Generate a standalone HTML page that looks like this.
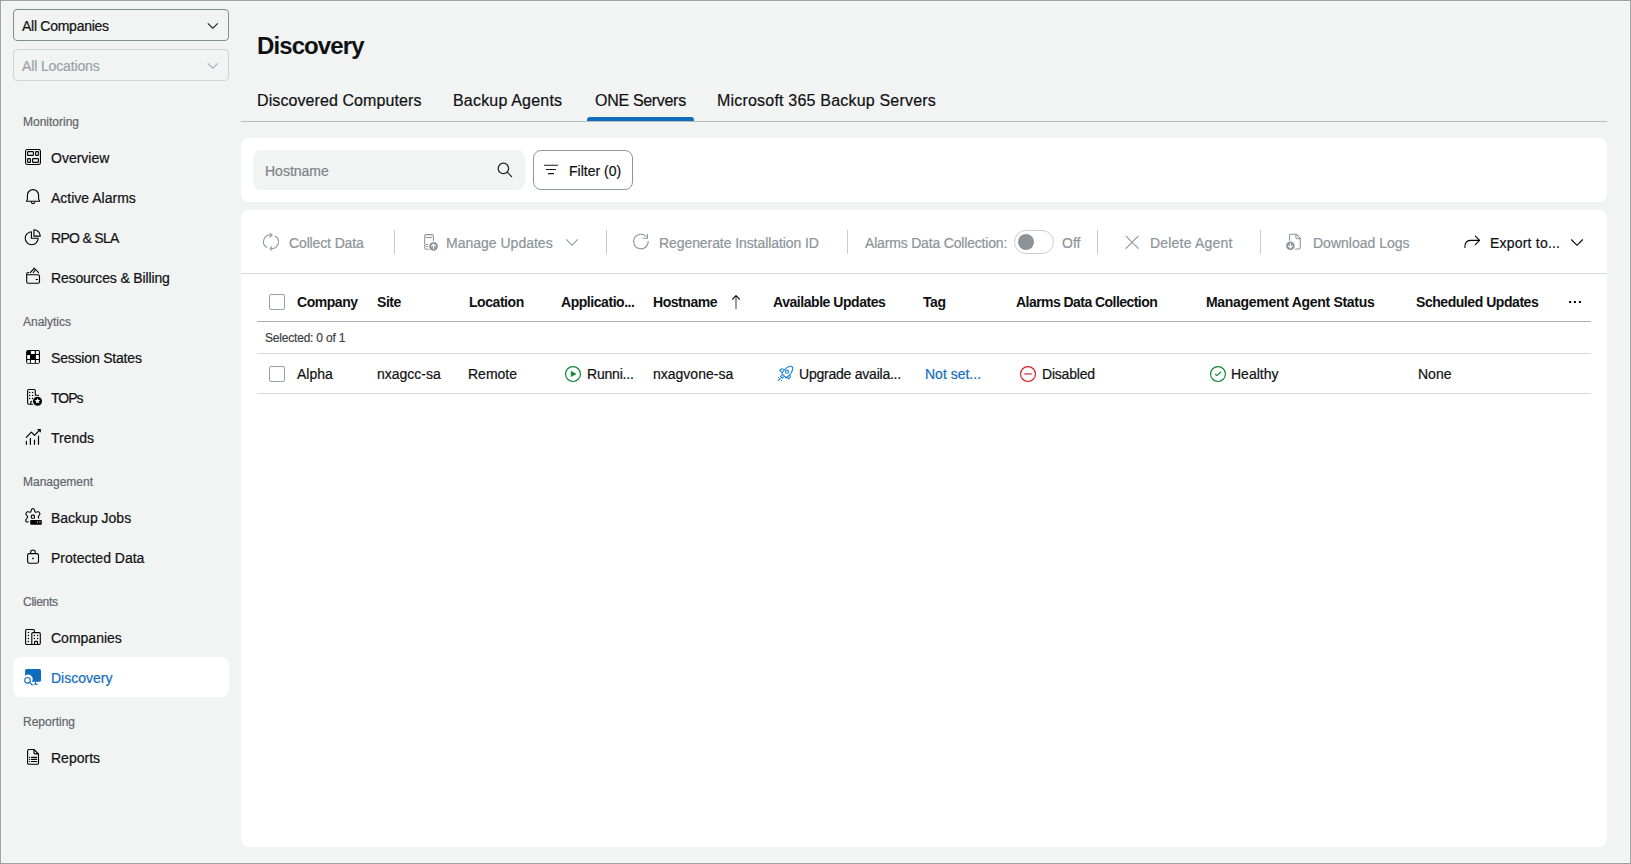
<!DOCTYPE html>
<html><head><meta charset="utf-8">
<style>
html,body{margin:0;padding:0;}
body{width:1631px;height:864px;position:relative;overflow:hidden;background:#f2f3f3;font-family:"Liberation Sans",sans-serif;color:#0f1112;}
.a{position:absolute;}
.t{position:absolute;white-space:nowrap;line-height:1;font-size:14px;-webkit-text-stroke:0.2px currentColor;}
.s12{font-size:12px;}
.s16{font-size:16px;}
.b{font-weight:bold;-webkit-text-stroke:0;}
.hd{font-weight:bold;letter-spacing:-0.45px;-webkit-text-stroke:0;}
.grey{color:#8b9499;}
.lbl{color:#5f666b;font-size:12px;}
svg{position:absolute;overflow:visible;}
.frame{position:absolute;left:0;top:0;width:1629px;height:862px;border:1px solid #a0a0a0;box-shadow:inset 0 0 0 1px #f8f9f9;pointer-events:none;}
.panel{position:absolute;background:#fff;border-radius:8px;}
.sep{position:absolute;top:230px;width:1px;height:24px;background:#c9cdd0;}
.cb{position:absolute;width:14px;height:14px;border:1px solid #9aa1a5;border-radius:2px;background:#fff;}
</style></head><body>

<!-- Sidebar dropdowns -->
<div class="a" style="left:13px;top:9px;width:214px;height:30px;border:1px solid #858c91;border-radius:4px;"></div>
<div class="t" style="left:22px;top:19px;letter-spacing:-0.27px;">All Companies</div>
<svg style="left:205px;top:20px" width="14" height="10"><path d="M2.8 3.4 L7.8 8.2 L12.8 3.4" fill="none" stroke="#1a1c1e" stroke-width="1.05"/></svg>

<div class="a" style="left:13px;top:49px;width:214px;height:30px;border:1px solid #cfd3d5;border-radius:4px;"></div>
<div class="t" style="left:22px;top:59px;color:#9aa1a6;letter-spacing:-0.14px;">All Locations</div>
<svg style="left:205px;top:60px" width="14" height="10"><path d="M2.8 3.4 L7.8 8.2 L12.8 3.4" fill="none" stroke="#a3a9ad" stroke-width="1.05"/></svg>

<!-- Sidebar sections -->
<div class="t lbl" style="left:23px;top:116px;">Monitoring</div>
<div class="t" style="left:51px;top:151px;">Overview</div>
<div class="t" style="left:51px;top:191px;">Active Alarms</div>
<div class="t" style="left:51px;top:231px;letter-spacing:-0.69px;">RPO &amp; SLA</div>
<div class="t" style="left:51px;top:271px;letter-spacing:-0.14px;">Resources &amp; Billing</div>

<div class="t lbl" style="left:23px;top:316px;">Analytics</div>
<div class="t" style="left:51px;top:351px;letter-spacing:-0.19px;">Session States</div>
<div class="t" style="left:51px;top:391px;letter-spacing:-1px;">TOPs</div>
<div class="t" style="left:51px;top:431px;">Trends</div>

<div class="t lbl" style="left:23px;top:476px;">Management</div>
<div class="t" style="left:51px;top:511px;">Backup Jobs</div>
<div class="t" style="left:51px;top:551px;">Protected Data</div>

<div class="t lbl" style="left:23px;top:596px;letter-spacing:-0.28px;">Clients</div>
<div class="t" style="left:51px;top:631px;">Companies</div>
<div class="a" style="left:13px;top:657px;width:216px;height:40px;background:#fff;border-radius:8px;"></div>
<div class="t" style="left:51px;top:671px;color:#0f6cbd;">Discovery</div>

<div class="t lbl" style="left:23px;top:716px;">Reporting</div>
<div class="t" style="left:51px;top:751px;">Reports</div>

<!-- ICONS_SIDEBAR -->
<g></g>
<!-- Overview -->
<svg style="left:20px;top:145px" width="25" height="25" viewBox="0 0 25 25" fill="none" stroke="#000" stroke-width="1.1">
<rect x="5.55" y="4.55" width="14.9" height="14.9" rx="1.6"/>
<rect x="7.6" y="6.6" width="5.8" height="3.8" rx="0.7"/>
<rect x="15.6" y="6.6" width="2.8" height="3.8" rx="0.7"/>
<rect x="7.6" y="13.6" width="2.8" height="3.8" rx="0.7"/>
<rect x="12.6" y="13.6" width="5.8" height="3.8" rx="0.7"/>
</svg>
<!-- Bell -->
<svg style="left:20px;top:185px" width="25" height="25" viewBox="0 0 25 25" fill="none" stroke="#000" stroke-width="1.1" stroke-linejoin="round">
<path d="M7.4 14.3 V10.2 A5.6 5.6 0 0 1 18.6 10.2 V14.3 C18.6 14.8 19.5 15.2 19.5 15.8 V16.3 H6.6 V15.8 C6.6 15.2 7.4 14.8 7.4 14.3 Z"/>
<path d="M11.2 16.8 A1.8 1.8 0 0 0 14.8 16.8"/>
</svg>
<!-- RPO -->
<svg style="left:20px;top:225px" width="25" height="25" viewBox="0 0 25 25" fill="none" stroke="#000" stroke-width="1.1" stroke-linejoin="round">
<path d="M11.4 6.7 A6.5 6.5 0 1 0 18.2 13.3 H11.4 Z"/>
<path d="M13.9 4.7 V11.1 H20.3 A6.4 6.4 0 0 0 13.9 4.7 Z"/>
</svg>
<!-- Wallet -->
<svg style="left:20px;top:265px" width="25" height="25" viewBox="0 0 25 25" fill="none" stroke="#000" stroke-width="1.1" stroke-linecap="round" stroke-linejoin="round">
<path d="M8.7 7.5 H8.2 A1.5 1.5 0 0 0 6.7 9 V16.7 A1.5 1.5 0 0 0 8.2 18.2 H18 A1.5 1.5 0 0 0 19.5 16.7 V11.3 A1.5 1.5 0 0 0 18 9.8 H6.9"/>
<path d="M10.3 7.6 L14.2 3.2 L18.6 7.6"/>
<path d="M13.3 7.6 L15.4 4.5"/>
<path d="M16.2 14.5 H17.6"/>
</svg>
<!-- Session states -->
<svg style="left:20px;top:345px" width="25" height="25" viewBox="0 0 25 25">
<rect x="6.1" y="5.1" width="13.9" height="13.7" rx="2" fill="#000"/>
<g fill="#fff">
<rect x="10.9" y="6.1" width="3.9" height="2.8" rx="0.4"/>
<rect x="15.9" y="6.1" width="3" height="2.8" rx="0.6"/>
<rect x="7.2" y="10" width="2.8" height="3.9" rx="0.4"/>
<rect x="15.9" y="10" width="3" height="3.9" rx="0.4"/>
<rect x="7.2" y="14.9" width="2.8" height="3" rx="0.6"/>
<rect x="10.9" y="14.9" width="3.9" height="3" rx="0.4"/>
<rect x="15.9" y="14.9" width="3" height="3" rx="0.6"/>
</g>
</svg>
<!-- TOPs -->
<svg style="left:20px;top:385px" width="25" height="25" viewBox="0 0 25 25" fill="none" stroke="#000" stroke-width="1.1" stroke-linecap="round" stroke-linejoin="round">
<path d="M12.5 19.3 H8.8 A1.2 1.2 0 0 1 7.6 18.1 V5.7 A1.2 1.2 0 0 1 8.8 4.5 H14.1 A1.2 1.2 0 0 1 15.3 5.7 V10.3 H18.6"/>
<path d="M10.7 19 V17.4 A1 1 0 0 1 11.7 16.4"/>
<g fill="#000" stroke="none">
<circle cx="9.7" cy="7.6" r="0.75"/><circle cx="12.6" cy="7.6" r="0.75"/>
<circle cx="9.7" cy="10.6" r="0.75"/><circle cx="12.6" cy="10.6" r="0.75"/>
<circle cx="9.7" cy="13.5" r="0.75"/><circle cx="12.6" cy="13.5" r="0.65"/>
<circle cx="17.5" cy="16.3" r="4.5"/>
</g>
<path fill="#fff" stroke="none" d="M17.5 13.2 L18.35 15.1 L20.3 15.25 L18.8 16.55 L19.3 18.5 L17.5 17.45 L15.7 18.5 L16.2 16.55 L14.7 15.25 L16.65 15.1 Z"/>
</svg>
<!-- Trends -->
<svg style="left:20px;top:425px" width="25" height="25" viewBox="0 0 25 25" fill="none" stroke="#000" stroke-width="1.2" stroke-linecap="round" stroke-linejoin="round">
<path d="M6.4 16.3 V19.3 M10.4 13.3 V19.3 M14.5 15.1 V19.3 M18.5 11.2 V19.3"/>
<path d="M6.3 12.4 L11.4 7.2 L14.5 10.4 L19.6 5.1"/>
<path d="M17.1 4.1 H20.8 V7.8 Z" fill="#000" stroke="none"/>
</svg>
<!-- Backup jobs -->
<svg style="left:20px;top:505px" width="25" height="25" viewBox="0 0 25 25" fill="none" stroke="#000" stroke-width="1.1" stroke-linecap="round" stroke-linejoin="round">
<path d="M8.2 16.6 C7.2 17.6 5.9 16.8 5.7 15.6 C5.5 14.5 6.4 13.8 7 13.3 C7.9 12.5 7.6 11.3 6.9 10.6 C6 9.8 5.6 8.8 6.1 8 C6.8 6.8 8.2 6.4 9.3 7.1 C10.3 7.6 10.9 7 11.1 5.8 C11.4 4.2 12 3.5 12.9 3.5 C13.8 3.5 14.4 4.2 14.7 5.8 C14.9 7 15.5 7.6 16.5 7.1 C17.6 6.4 19 6.8 19.7 8 C20.2 8.8 19.8 9.8 18.9 10.6 C18.2 11.3 17.9 12.3 18.8 13.1"/>
<rect x="11.3" y="10.1" width="3.2" height="3.2" rx="1.1"/>
<rect x="10.2" y="15.1" width="11.6" height="4.6" rx="0.9" fill="#000" stroke="none"/>
<rect x="16.9" y="16.2" width="1.1" height="1.7" fill="#999" stroke="none"/>
<rect x="19.1" y="16.2" width="1.6" height="1.7" fill="#777" stroke="none"/>
</svg>
<!-- Lock -->
<svg style="left:20px;top:545px" width="25" height="25" viewBox="0 0 25 25" fill="none" stroke="#000" stroke-width="1.1" stroke-linejoin="round">
<rect x="7.6" y="8.6" width="10.9" height="9.6" rx="1.6"/>
<path d="M10.6 8.6 V7.3 A2.35 2.35 0 0 1 15.3 7.3 V8.6"/>
<circle cx="13" cy="13.4" r="0.85" fill="#000" stroke="none"/>
</svg>
<!-- Companies -->
<svg style="left:20px;top:625px" width="25" height="25" viewBox="0 0 25 25" fill="none" stroke="#000" stroke-width="1.1" stroke-linejoin="round">
<path d="M11.8 19.5 H6.8 A1.2 1.2 0 0 1 5.6 18.3 V5.7 A1.2 1.2 0 0 1 6.8 4.5 H13.2 A1.2 1.2 0 0 1 14.4 5.7 V7.6"/>
<path d="M11.8 19.5 V8.8 A1.2 1.2 0 0 1 13 7.6 H19.1 A1.2 1.2 0 0 1 20.3 8.8 V18.3 A1.2 1.2 0 0 1 19.1 19.5 Z"/>
<path d="M14.6 19.3 V17.3 A0.9 0.9 0 0 1 15.5 16.4 H16.7 A0.9 0.9 0 0 1 17.6 17.3 V19.3"/>
<g fill="#000" stroke="none">
<circle cx="8.4" cy="7.6" r="0.75"/><circle cx="8.4" cy="10.6" r="0.75"/><circle cx="8.4" cy="13.5" r="0.75"/><circle cx="8.4" cy="16.5" r="0.75"/>
<circle cx="14.3" cy="10.6" r="0.75"/><circle cx="17.65" cy="10.6" r="0.75"/><circle cx="14.3" cy="13.5" r="0.75"/><circle cx="17.65" cy="13.5" r="0.75"/>
</g>
</svg>
<!-- Discovery -->
<svg style="left:20px;top:665px" width="25" height="25" viewBox="0 0 25 25">
<path fill="#0f6cbd" d="M6.6 4.05 H19.5 A1.5 1.5 0 0 1 21 5.55 V15.3 A1.5 1.5 0 0 1 19.5 16.8 H11.6 A4.4 4.4 0 0 0 5.1 10.9 V5.55 A1.5 1.5 0 0 1 6.6 4.05 Z"/>
<path d="M15.6 16.5 V19.2 M13.6 19.2 H17.9" stroke="#0f6cbd" stroke-width="1.1" fill="none"/>
<circle cx="7.5" cy="15.3" r="2.8" fill="none" stroke="#0f6cbd" stroke-width="1.1"/>
<path d="M9.6 17.3 L12.3 20" stroke="#0f6cbd" stroke-width="1.1" stroke-linecap="round"/>
</svg>
<!-- Reports -->
<svg style="left:20px;top:745px" width="25" height="25" viewBox="0 0 25 25" fill="none" stroke="#000" stroke-width="1.1" stroke-linecap="round" stroke-linejoin="round">
<path d="M13.9 4.5 H8.9 A1.3 1.3 0 0 0 7.6 5.8 V17.9 A1.3 1.3 0 0 0 8.9 19.2 H17.2 A1.3 1.3 0 0 0 18.5 17.9 V9 L13.9 4.5 V7.6 A1.3 1.3 0 0 0 15.2 8.9 H18.3"/>
<path d="M11.4 12.4 H16.7 M11.4 14.4 H16.7 M11.4 16.5 H16.7"/>
<g fill="#000" stroke="none"><circle cx="9.5" cy="12.4" r="0.6"/><circle cx="9.5" cy="14.4" r="0.6"/><circle cx="9.5" cy="16.5" r="0.6"/></g>
</svg>


<!-- Title & tabs -->
<div class="t b" style="left:257px;top:34px;font-size:24px;letter-spacing:-0.9px;">Discovery</div>
<div class="t s16" style="left:257px;top:93px;letter-spacing:0.09px;">Discovered Computers</div>
<div class="t s16" style="left:453px;top:93px;letter-spacing:0.19px;">Backup Agents</div>
<div class="t s16" style="left:595px;top:93px;letter-spacing:-0.31px;">ONE Servers</div>
<div class="t s16" style="left:717px;top:93px;letter-spacing:0.2px;">Microsoft 365 Backup Servers</div>
<div class="a" style="left:241px;top:121px;width:1366px;height:1px;background:#b7bcbf;"></div>
<div class="a" style="left:587px;top:117px;width:107px;height:4px;background:#0f6cbd;border-radius:3px 3px 0 0;"></div>

<!-- Filter panel -->
<div class="panel" style="left:241px;top:138px;width:1366px;height:64px;"></div>
<div class="a" style="left:253px;top:150px;width:272px;height:40px;background:#f2f3f3;border-radius:8px;"></div>
<div class="t" style="left:265px;top:164px;color:#7c8387;">Hostname</div>
<div class="a" style="left:533px;top:150px;width:98px;height:38px;border:1px solid #8f969a;border-radius:8px;"></div>
<div class="t" style="left:569px;top:164px;">Filter (0)</div>

<!-- Main panel -->
<div class="panel" style="left:241px;top:210px;width:1366px;height:637px;"></div>
<div class="a" style="left:241px;top:273px;width:1366px;height:1px;background:#d5d9db;"></div>

<div class="t grey" style="left:289px;top:236px;letter-spacing:-0.13px;">Collect Data</div>
<div class="sep" style="left:394px;"></div>
<div class="t grey" style="left:446px;top:236px;">Manage Updates</div>
<div class="sep" style="left:606px;"></div>
<div class="t grey" style="left:659px;top:236px;letter-spacing:-0.08px;">Regenerate Installation ID</div>
<div class="sep" style="left:847px;"></div>
<div class="t grey" style="left:865px;top:236px;letter-spacing:-0.18px;">Alarms Data Collection:</div>
<div class="a" style="left:1014px;top:230px;width:38px;height:22px;border:1px solid #c9cdd0;border-radius:12px;background:#fff;"></div>
<div class="a" style="left:1018px;top:234px;width:16px;height:16px;border-radius:50%;background:#8b9398;"></div>
<div class="t grey" style="left:1062px;top:236px;">Off</div>
<div class="sep" style="left:1097px;"></div>
<div class="t grey" style="left:1150px;top:236px;letter-spacing:0.2px;">Delete Agent</div>
<div class="sep" style="left:1260px;"></div>
<div class="t grey" style="left:1313px;top:236px;">Download Logs</div>
<div class="t" style="left:1490px;top:236px;letter-spacing:0.21px;">Export to...</div>

<!-- Table -->
<div class="cb" style="left:269px;top:294px;"></div>
<div class="t hd" style="left:297px;top:295px;">Company</div>
<div class="t hd" style="left:377px;top:295px;">Site</div>
<div class="t hd" style="left:469px;top:295px;">Location</div>
<div class="t hd" style="left:561px;top:295px;">Applicatio...</div>
<div class="t hd" style="left:653px;top:295px;">Hostname</div>
<div class="t hd" style="left:773px;top:295px;">Available Updates</div>
<div class="t hd" style="left:923px;top:295px;">Tag</div>
<div class="t hd" style="left:1016px;top:295px;letter-spacing:-0.55px;">Alarms Data Collection</div>
<div class="t hd" style="left:1206px;top:295px;letter-spacing:-0.3px;">Management Agent Status</div>
<div class="t hd" style="left:1416px;top:295px;">Scheduled Updates</div>
<div class="a" style="left:257px;top:321px;width:1334px;height:1px;background:#a9afb2;"></div>

<div class="t s12" style="left:265px;top:332px;color:#3b4044;letter-spacing:-0.2px;">Selected: 0 of 1</div>
<div class="a" style="left:257px;top:353px;width:1334px;height:1px;background:#d5d9db;"></div>

<div class="cb" style="left:269px;top:366px;"></div>
<div class="t" style="left:297px;top:367px;">Alpha</div>
<div class="t" style="left:377px;top:367px;">nxagcc-sa</div>
<div class="t" style="left:468px;top:367px;">Remote</div>
<div class="t" style="left:587px;top:367px;letter-spacing:-0.2px;">Runni...</div>
<div class="t" style="left:653px;top:367px;">nxagvone-sa</div>
<div class="t" style="left:799px;top:367px;letter-spacing:-0.23px;">Upgrade availa...</div>
<div class="t" style="left:925px;top:367px;color:#0f6cbd;">Not set...</div>
<div class="t" style="left:1042px;top:367px;letter-spacing:-0.2px;">Disabled</div>
<div class="t" style="left:1231px;top:367px;">Healthy</div>
<div class="t" style="left:1418px;top:367px;">None</div>
<div class="a" style="left:257px;top:393px;width:1334px;height:1px;background:#d5d9db;"></div>

<!-- ICONS_MAIN -->
<!-- search -->
<svg style="left:490px;top:155px" width="30" height="30" viewBox="0 0 30 30" fill="none" stroke="#1a1c1e" stroke-width="1.2" stroke-linecap="round">
<circle cx="13.4" cy="13.4" r="5.2"/><path d="M17.2 17.2 L21.6 21.6"/>
</svg>
<!-- filter icon -->
<svg style="left:540px;top:160px" width="20" height="20" viewBox="0 0 20 20" fill="none" stroke="#1a1c1e" stroke-width="1.1">
<path d="M4 5.3 H18 M6 9.5 H16 M8 13.6 H14"/>
</svg>
<!-- collect data -->
<svg style="left:260px;top:230px" width="22" height="22" viewBox="0 0 22 22" fill="none" stroke="#8b9398" stroke-width="1.05" stroke-linecap="round" stroke-linejoin="round">
<path d="M6.6 17.3 A6.6 6.6 0 0 1 11.2 5.2"/>
<path d="M10.2 3.3 L12.1 5.2 L9.6 7.3"/>
<path d="M15.3 6.3 A6.6 6.6 0 0 1 11.4 18.5"/>
<path d="M11.7 16.6 L9.8 18.5 L11.6 20.3"/>
</svg>
<!-- manage updates -->
<svg style="left:420px;top:230px" width="22" height="22" viewBox="0 0 22 22" fill="none" stroke="#8b9398" stroke-width="1.05" stroke-linecap="round" stroke-linejoin="round">
<path d="M8.7 19.2 H6.2 A1.5 1.5 0 0 1 4.7 17.7 V6.1 A1.5 1.5 0 0 1 6.2 4.6 H11.9 A1.5 1.5 0 0 1 13.4 6.1 V10.6"/>
<path d="M6.2 7.5 H11.7 M6.2 14.4 H7.7 M6.2 16.4 H7.7"/>
<circle cx="13.5" cy="16.4" r="4.3" fill="#8b9398" stroke="none"/>
<path d="M13.5 18.8 V14.3 M11.5 16.2 L13.5 14.2 L15.5 16.2" stroke="#fff" stroke-width="1.1"/>
</svg>
<svg style="left:562px;top:236px" width="20" height="14" viewBox="0 0 20 14" fill="none" stroke="#8b9398" stroke-width="1.05"><path d="M4.3 3.3 L10 9.3 L15.7 3.3"/></svg>
<!-- regenerate -->
<svg style="left:630px;top:230px" width="22" height="22" viewBox="0 0 22 22" fill="none" stroke="#8b9398" stroke-width="1.05" stroke-linecap="round" stroke-linejoin="round">
<path d="M18.2 11.3 A7.3 7.3 0 1 1 16.2 6.5"/>
<path d="M17.5 4.3 V8.3 H13.3"/>
</svg>
<!-- delete X -->
<svg style="left:1120px;top:230px" width="24" height="24" viewBox="0 0 24 24" fill="none" stroke="#8b9398" stroke-width="1.05" stroke-linecap="round">
<path d="M6 6.2 L18.2 18.4 M18.2 6.2 L6 18.4"/>
</svg>
<!-- download logs -->
<svg style="left:1282px;top:230px" width="22" height="22" viewBox="0 0 22 22" fill="none" stroke="#8b9398" stroke-width="1.05" stroke-linecap="round" stroke-linejoin="round">
<path d="M7.5 10.3 V5.7 A1.5 1.5 0 0 1 9 4.2 H14.3 L18.3 8.3 V17.5 A1.5 1.5 0 0 1 16.8 19 H13.4"/>
<path d="M13.9 4.4 V7.3 A1.5 1.5 0 0 0 15.4 8.8 H18.2"/>
<circle cx="8.4" cy="15.8" r="4.3" fill="#8b9398" stroke="none"/>
<path d="M8.4 13.4 V17.8 M6.4 15.9 L8.4 17.9 L10.4 15.9" stroke="#fff" stroke-width="1.1"/>
</svg>
<!-- export -->
<svg style="left:1460px;top:230px" width="22" height="22" viewBox="0 0 22 22" fill="none" stroke="#000" stroke-width="1.1" stroke-linecap="round" stroke-linejoin="round">
<path d="M4.9 17.4 C4.9 13.2 7 10.4 10.4 10.4 H19.4"/>
<path d="M15.4 6.2 L19.5 10.4 L15.4 14.6"/>
</svg>
<svg style="left:1567px;top:236px" width="20" height="14" viewBox="0 0 20 14" fill="none" stroke="#000" stroke-width="1.1"><path d="M4.3 3.5 L10 9.3 L15.7 3.5"/></svg>
<!-- sort arrow -->
<svg style="left:725px;top:290px" width="25" height="25" viewBox="0 0 25 25" fill="none" stroke-width="1.15" stroke-linecap="round" stroke-linejoin="round">
<path d="M11 6.3 V18.6" stroke="#555"/>
<path d="M7.6 9.1 L11 5.7 L14.4 9.1" stroke="#000"/>
</svg>
<!-- dots -->
<svg style="left:1560px;top:290px" width="30" height="25" viewBox="0 0 30 25" fill="#000">
<rect x="9" y="10.9" width="2.1" height="2.1" rx="0.5"/><rect x="13.9" y="10.9" width="2.1" height="2.1" rx="0.5"/><rect x="18.9" y="10.9" width="2.1" height="2.1" rx="0.5"/>
</svg>
<!-- running -->
<svg style="left:562px;top:363px" width="22" height="22" viewBox="0 0 22 22" fill="none" stroke="#12843a" stroke-width="1.15">
<circle cx="11" cy="11" r="7.45"/>
<path d="M9.2 8.3 V13.6 L13.9 10.95 Z" fill="#12843a" stroke="#12843a" stroke-width="0.7" stroke-linejoin="round"/>
</svg>
<!-- rocket -->
<svg style="left:775px;top:363px" width="22" height="22" viewBox="0 0 22 22" fill="none" stroke="#1a80d3" stroke-width="1.1" stroke-linecap="round" stroke-linejoin="round">
<path d="M6.9 10.6 L11.3 15 C14.6 12.3 17.7 9.2 17.7 5.2 C17.7 3.9 17.1 3.3 15.9 3.3 C12 3.3 9.3 6.4 6.9 10.6 Z"/>
<circle cx="12" cy="8.7" r="1.6"/>
<path d="M8.5 6.3 L6.5 5.8 L4.8 7.5 L6.9 9.4"/>
<path d="M14.9 12 L15.4 14.1 L13.7 15.9 L11.8 13.9"/>
<path d="M6.7 12.3 L5.6 13.4 L7.3 15.1 L8.4 14"/>
<path d="M3.5 17.4 L5.4 15.5"/>
<circle cx="3.5" cy="14.5" r="0.55" fill="#1a80d3" stroke="none"/>
<circle cx="6.5" cy="17.4" r="0.55" fill="#1a80d3" stroke="none"/>
</svg>
<!-- disabled -->
<svg style="left:1017px;top:363px" width="22" height="22" viewBox="0 0 22 22" fill="none" stroke="#d81b25" stroke-width="1.15">
<circle cx="11" cy="11" r="7.45"/>
<path d="M7.3 10.95 H14.8" stroke="#e4676c" stroke-width="1.7"/>
</svg>
<!-- healthy -->
<svg style="left:1207px;top:363px" width="22" height="22" viewBox="0 0 22 22" fill="none" stroke="#12843a" stroke-width="1.15" stroke-linecap="round" stroke-linejoin="round">
<circle cx="11" cy="11" r="7.45"/>
<path d="M8.4 11.3 L9.9 12.6 L13.8 9.2"/>
</svg>


<div class="frame"></div>
</body></html>
